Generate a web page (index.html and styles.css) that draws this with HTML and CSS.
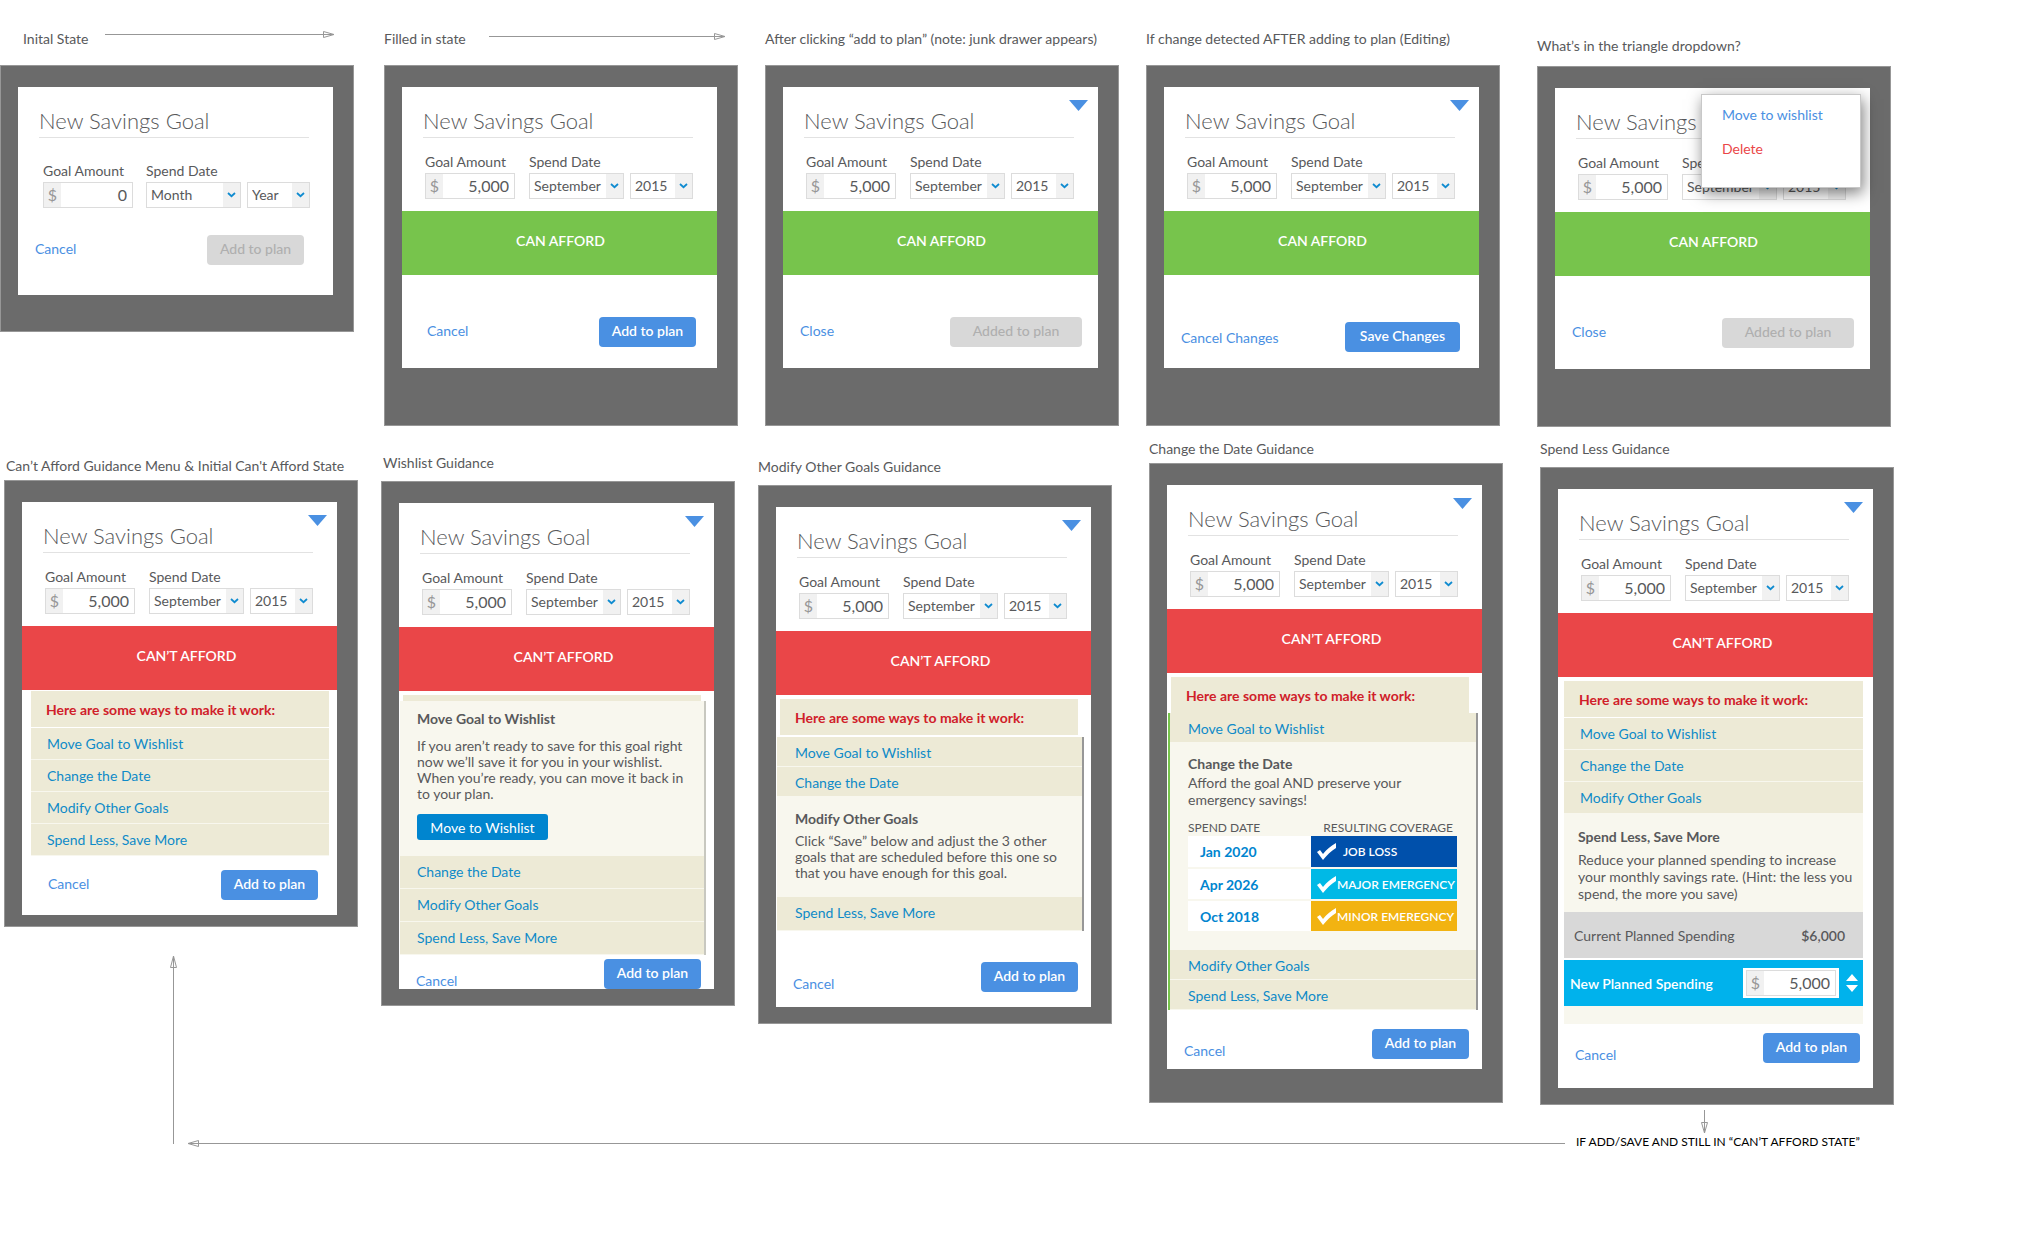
FILE: index.html
```html
<!DOCTYPE html>
<html lang="en">
<head>
  <meta charset="UTF-8">
  <meta name="viewport" content="width=device-width, initial-scale=1.0">
  <title>New Savings Goal - States</title>
  <link rel="stylesheet" href="styles.css">
</head>
<body>
  <!-- Shared icons -->
  <svg class="sprite" width="0" height="0" aria-hidden="true">
    <symbol id="chevron" viewBox="0 0 9 6"><path d="M1 1 L4.5 4.2 L8 1" fill="none" stroke="#0f8bd0" stroke-width="1.8"/></symbol>
    <symbol id="triangle" viewBox="0 0 19 11"><path d="M0 0 H19 L9.5 11 Z" fill="#4a90e2"/></symbol>
    <symbol id="check" viewBox="0 0 20 17"><path d="M0 9 L3 7 L6 11 C10 6 14 3 19 0 L19 5 C14 8 10 12 6 17 Z" fill="#fff"/></symbol>
  </svg>

  <main class="canvas">
    <!-- Row 1 -->
    <section class="screen screen-initial">
      <h2 class="screen-label">Inital State</h2>
      <div class="frame">
        <form class="card">
          <h3 class="goal-title">New Savings Goal</h3>
          <div class="fields">
            <div class="field">
              <label for="amount1">Goal Amount</label>
              <div class="money"><span>$</span><input id="amount1" type="text" value="0"></div>
            </div>
            <div class="field">
              <label for="month1">Spend Date</label>
              <div class="dates">
                <div class="select month"><select id="month1"><option>Month</option></select><span class="arrow"><svg><use href="#chevron"/></svg></span></div>
                <div class="select year"><select aria-label="Year"><option>Year</option></select><span class="arrow"><svg><use href="#chevron"/></svg></span></div>
              </div>
            </div>
          </div>
          <div class="actions">
            <a href="#">Cancel</a>
            <button class="btn" type="button" disabled>Add to plan</button>
          </div>
        </form>
      </div>
    </section>

    <section class="screen screen-filled">
      <h2 class="screen-label">Filled in state</h2>
      <div class="frame">
        <form class="card">
          <h3 class="goal-title">New Savings Goal</h3>
          <div class="fields">
            <div class="field">
              <label for="amount2">Goal Amount</label>
              <div class="money"><span>$</span><input id="amount2" type="text" value="5,000"></div>
            </div>
            <div class="field">
              <label for="month2">Spend Date</label>
              <div class="dates">
                <div class="select month"><select id="month2"><option>September</option></select><span class="arrow"><svg><use href="#chevron"/></svg></span></div>
                <div class="select year"><select aria-label="Year"><option>2015</option></select><span class="arrow"><svg><use href="#chevron"/></svg></span></div>
              </div>
            </div>
          </div>
          <div class="status can">CAN AFFORD</div>
          <div class="actions">
            <a href="#">Cancel</a>
            <button class="btn" type="button">Add to plan</button>
          </div>
        </form>
      </div>
    </section>

    <section class="screen screen-added">
      <h2 class="screen-label">After clicking “add to plan” (note: junk drawer appears)</h2>
      <div class="frame">
        <form class="card">
          <button class="menu-toggle" type="button" aria-label="More options"><svg><use href="#triangle"/></svg></button>
          <h3 class="goal-title">New Savings Goal</h3>
          <div class="fields">
            <div class="field">
              <label for="amount3">Goal Amount</label>
              <div class="money"><span>$</span><input id="amount3" type="text" value="5,000"></div>
            </div>
            <div class="field">
              <label for="month3">Spend Date</label>
              <div class="dates">
                <div class="select month"><select id="month3"><option>September</option></select><span class="arrow"><svg><use href="#chevron"/></svg></span></div>
                <div class="select year"><select aria-label="Year"><option>2015</option></select><span class="arrow"><svg><use href="#chevron"/></svg></span></div>
              </div>
            </div>
          </div>
          <div class="status can">CAN AFFORD</div>
          <div class="actions">
            <a href="#">Close</a>
            <button class="btn btn-wide" type="button" disabled>Added to plan</button>
          </div>
        </form>
      </div>
    </section>

    <section class="screen screen-editing">
      <h2 class="screen-label">If change detected AFTER adding to plan (Editing)</h2>
      <div class="frame">
        <form class="card">
          <button class="menu-toggle" type="button" aria-label="More options"><svg><use href="#triangle"/></svg></button>
          <h3 class="goal-title">New Savings Goal</h3>
          <div class="fields">
            <div class="field">
              <label for="amount4">Goal Amount</label>
              <div class="money"><span>$</span><input id="amount4" type="text" value="5,000"></div>
            </div>
            <div class="field">
              <label for="month4">Spend Date</label>
              <div class="dates">
                <div class="select month"><select id="month4"><option>September</option></select><span class="arrow"><svg><use href="#chevron"/></svg></span></div>
                <div class="select year"><select aria-label="Year"><option>2015</option></select><span class="arrow"><svg><use href="#chevron"/></svg></span></div>
              </div>
            </div>
          </div>
          <div class="status can">CAN AFFORD</div>
          <div class="actions">
            <a href="#">Cancel Changes</a>
            <button class="btn btn-save" type="button">Save Changes</button>
          </div>
        </form>
      </div>
    </section>

    <section class="screen screen-dropdown">
      <h2 class="screen-label">What’s in the triangle dropdown?</h2>
      <div class="frame">
        <form class="card">
          <h3 class="goal-title">New Savings Goal</h3>
          <div class="fields">
            <div class="field">
              <label for="amount5">Goal Amount</label>
              <div class="money"><span>$</span><input id="amount5" type="text" value="5,000"></div>
            </div>
            <div class="field">
              <label for="month5">Spend Date</label>
              <div class="dates">
                <div class="select month"><select id="month5"><option>September</option></select><span class="arrow"><svg><use href="#chevron"/></svg></span></div>
                <div class="select year"><select aria-label="Year"><option>2015</option></select><span class="arrow"><svg><use href="#chevron"/></svg></span></div>
              </div>
            </div>
          </div>
          <div class="status can">CAN AFFORD</div>
          <div class="actions">
            <a href="#">Close</a>
            <button class="btn btn-wide" type="button" disabled>Added to plan</button>
          </div>
          <nav class="menu">
            <a href="#">Move to wishlist</a>
            <a href="#" class="delete">Delete</a>
          </nav>
        </form>
      </div>
    </section>

    <!-- Row 2 -->
    <section class="screen screen-guidance">
      <h2 class="screen-label">Can’t Afford Guidance Menu &amp; Initial Can't Afford State</h2>
      <div class="frame">
        <form class="card">
          <button class="menu-toggle" type="button" aria-label="More options"><svg><use href="#triangle"/></svg></button>
          <h3 class="goal-title">New Savings Goal</h3>
          <div class="fields">
            <div class="field">
              <label for="amount6">Goal Amount</label>
              <div class="money"><span>$</span><input id="amount6" type="text" value="5,000"></div>
            </div>
            <div class="field">
              <label for="month6">Spend Date</label>
              <div class="dates">
                <div class="select month"><select id="month6"><option>September</option></select><span class="arrow"><svg><use href="#chevron"/></svg></span></div>
                <div class="select year"><select aria-label="Year"><option>2015</option></select><span class="arrow"><svg><use href="#chevron"/></svg></span></div>
              </div>
            </div>
          </div>
          <div class="status cant">CAN’T AFFORD</div>
          <div class="guide-head">Here are some ways to make it work:</div>
          <div class="guide">
            <a class="guide-item" href="#">Move Goal to Wishlist</a>
            <a class="guide-item" href="#">Change the Date</a>
            <a class="guide-item" href="#">Modify Other Goals</a>
            <a class="guide-item" href="#">Spend Less, Save More</a>
          </div>
          <div class="actions">
            <a href="#">Cancel</a>
            <button class="btn" type="button">Add to plan</button>
          </div>
        </form>
      </div>
    </section>

    <section class="screen screen-wishlist">
      <h2 class="screen-label">Wishlist Guidance</h2>
      <div class="frame">
        <form class="card">
          <button class="menu-toggle" type="button" aria-label="More options"><svg><use href="#triangle"/></svg></button>
          <h3 class="goal-title">New Savings Goal</h3>
          <div class="fields">
            <div class="field">
              <label for="amount7">Goal Amount</label>
              <div class="money"><span>$</span><input id="amount7" type="text" value="5,000"></div>
            </div>
            <div class="field">
              <label for="month7">Spend Date</label>
              <div class="dates">
                <div class="select month"><select id="month7"><option>September</option></select><span class="arrow"><svg><use href="#chevron"/></svg></span></div>
                <div class="select year"><select aria-label="Year"><option>2015</option></select><span class="arrow"><svg><use href="#chevron"/></svg></span></div>
              </div>
            </div>
          </div>
          <div class="status cant">CAN’T AFFORD</div>
          <div class="guide-head"></div>
          <div class="guide">
            <div class="panel">
              <h4>Move Goal to Wishlist</h4>
              <p>If you aren’t ready to save for this goal right<br>now we’ll save it for you in your wishlist.<br>When you’re ready, you can move it back in<br>to your plan.</p>
              <button class="btn-wishlist" type="button">Move to Wishlist</button>
            </div>
            <a class="guide-item" href="#">Change the Date</a>
            <a class="guide-item" href="#">Modify Other Goals</a>
            <a class="guide-item" href="#">Spend Less, Save More</a>
          </div>
          <div class="actions">
            <a href="#">Cancel</a>
            <button class="btn" type="button">Add to plan</button>
          </div>
        </form>
      </div>
    </section>

    <section class="screen screen-modify">
      <h2 class="screen-label">Modify Other Goals Guidance</h2>
      <div class="frame">
        <form class="card">
          <button class="menu-toggle" type="button" aria-label="More options"><svg><use href="#triangle"/></svg></button>
          <h3 class="goal-title">New Savings Goal</h3>
          <div class="fields">
            <div class="field">
              <label for="amount8">Goal Amount</label>
              <div class="money"><span>$</span><input id="amount8" type="text" value="5,000"></div>
            </div>
            <div class="field">
              <label for="month8">Spend Date</label>
              <div class="dates">
                <div class="select month"><select id="month8"><option>September</option></select><span class="arrow"><svg><use href="#chevron"/></svg></span></div>
                <div class="select year"><select aria-label="Year"><option>2015</option></select><span class="arrow"><svg><use href="#chevron"/></svg></span></div>
              </div>
            </div>
          </div>
          <div class="status cant">CAN’T AFFORD</div>
          <div class="guide-head">Here are some ways to make it work:</div>
          <div class="guide">
            <a class="guide-item" href="#">Move Goal to Wishlist</a>
            <a class="guide-item" href="#">Change the Date</a>
            <div class="panel">
              <h4>Modify Other Goals</h4>
              <p>Click “Save” below and adjust the 3 other<br>goals that are scheduled before this one so<br>that you have enough for this goal.</p>
            </div>
            <a class="guide-item last" href="#">Spend Less, Save More</a>
          </div>
          <div class="actions">
            <a href="#">Cancel</a>
            <button class="btn" type="button">Add to plan</button>
          </div>
        </form>
      </div>
    </section>

    <section class="screen screen-date">
      <h2 class="screen-label">Change the Date Guidance</h2>
      <div class="frame">
        <form class="card">
          <button class="menu-toggle" type="button" aria-label="More options"><svg><use href="#triangle"/></svg></button>
          <h3 class="goal-title">New Savings Goal</h3>
          <div class="fields">
            <div class="field">
              <label for="amount9">Goal Amount</label>
              <div class="money"><span>$</span><input id="amount9" type="text" value="5,000"></div>
            </div>
            <div class="field">
              <label for="month9">Spend Date</label>
              <div class="dates">
                <div class="select month"><select id="month9"><option>September</option></select><span class="arrow"><svg><use href="#chevron"/></svg></span></div>
                <div class="select year"><select aria-label="Year"><option>2015</option></select><span class="arrow"><svg><use href="#chevron"/></svg></span></div>
              </div>
            </div>
          </div>
          <div class="status cant">CAN’T AFFORD</div>
          <div class="guide-head">Here are some ways to make it work:</div>
          <div class="guide">
            <a class="guide-item" href="#">Move Goal to Wishlist</a>
            <div class="panel">
              <h4>Change the Date</h4>
              <p>Afford the goal AND preserve your<br>emergency savings!</p>
              <table class="coverage">
                <thead>
                  <tr><th>SPEND DATE</th><th>RESULTING COVERAGE</th></tr>
                </thead>
                <tbody>
                  <tr><td>Jan 2020</td><td class="job"><div><svg><use href="#check"/></svg><span>JOB LOSS</span></div></td></tr>
                  <tr><td>Apr 2026</td><td class="major"><div><svg><use href="#check"/></svg><span>MAJOR EMERGENCY</span></div></td></tr>
                  <tr><td>Oct 2018</td><td class="minor"><div><svg><use href="#check"/></svg><span>MINOR EMEREGNCY</span></div></td></tr>
                </tbody>
              </table>
            </div>
            <a class="guide-item" href="#">Modify Other Goals</a>
            <a class="guide-item" href="#">Spend Less, Save More</a>
          </div>
          <div class="actions">
            <a href="#">Cancel</a>
            <button class="btn" type="button">Add to plan</button>
          </div>
        </form>
      </div>
    </section>

    <section class="screen screen-spend">
      <h2 class="screen-label">Spend Less Guidance</h2>
      <div class="frame">
        <form class="card">
          <button class="menu-toggle" type="button" aria-label="More options"><svg><use href="#triangle"/></svg></button>
          <h3 class="goal-title">New Savings Goal</h3>
          <div class="fields">
            <div class="field">
              <label for="amount10">Goal Amount</label>
              <div class="money"><span>$</span><input id="amount10" type="text" value="5,000"></div>
            </div>
            <div class="field">
              <label for="month10">Spend Date</label>
              <div class="dates">
                <div class="select month"><select id="month10"><option>September</option></select><span class="arrow"><svg><use href="#chevron"/></svg></span></div>
                <div class="select year"><select aria-label="Year"><option>2015</option></select><span class="arrow"><svg><use href="#chevron"/></svg></span></div>
              </div>
            </div>
          </div>
          <div class="status cant">CAN’T AFFORD</div>
          <div class="guide-head">Here are some ways to make it work:</div>
          <div class="guide">
            <a class="guide-item" href="#">Move Goal to Wishlist</a>
            <a class="guide-item" href="#">Change the Date</a>
            <a class="guide-item" href="#">Modify Other Goals</a>
            <div class="panel">
              <h4>Spend Less, Save More</h4>
              <p>Reduce your planned spending to increase<br>your monthly savings rate. (Hint: the less you<br>spend, the more you save)</p>
            </div>
            <div class="spending current"><span>Current Planned Spending</span><strong>$6,000</strong></div>
            <div class="spending new">
              <label for="spending">New Planned Spending</label>
              <div class="money-box"><div class="money"><span>$</span><input id="spending" type="text" value="5,000"></div></div>
              <svg class="stepper" width="12" height="18" viewBox="0 0 12 18"><path d="M0 7 L6 0 L12 7 Z M0 11 L6 18 L12 11 Z" fill="#fff"/></svg>
            </div>
          </div>
          <div class="actions">
            <a href="#">Cancel</a>
            <button class="btn" type="button">Add to plan</button>
          </div>
        </form>
      </div>
    </section>

    <!-- Flow arrows between the screens -->
    <svg class="arrows" width="1900" height="1160" viewBox="0 0 1900 1160" fill="none" stroke="#979797">
      <path d="M105 34.5 H334 M323.5 31.5 L334 34.5 L323.5 37.5 Z"/>
      <path d="M489 36.5 H725 M714.5 33.5 L725 36.5 L714.5 39.5 Z"/>
      <path d="M173.5 1144 V956 M170.5 967.5 L173.5 956 L176.5 967.5 Z"/>
      <path d="M1565 1143.5 H188 M198.5 1140.5 L188 1143.5 L198.5 1146.5 Z"/>
      <path d="M1704.5 1110 V1133 M1701.5 1122.5 L1704.5 1133 L1707.5 1122.5 Z"/>
    </svg>
    <p class="flow-note">IF ADD/SAVE AND STILL IN “CAN’T AFFORD STATE”</p>
  </main>
</body>
</html>
```
FILE: styles.css
```css
* {
  box-sizing: border-box;
}

body {
  margin: 0;
  background-color: #fff;
  font-family: Lato, "Open Sans", sans-serif;
  font-size: 14px;
  color: #58595b;
}

h2, h3, h4, p {
  margin: 0;
  font-weight: normal;
}

a {
  color: #4a90e2;
  text-decoration: none;
}

input, select, button {
  font: inherit;
  color: inherit;
  margin: 0;
  padding: 0;
  border: none;
  border-radius: 0;
  background: none;
}

.sprite {
  position: absolute;
}

/* Canvas with the free-standing screens */
.canvas {
  position: relative;
  min-height: 1240px;
}

.screen {
  position: absolute;
  width: 354px;
}

.screen-initial { left: 0; top: 27px; }
.screen-filled { left: 384px; top: 27px; }
.screen-added { left: 765px; top: 27px; }
.screen-editing { left: 1146px; top: 27px; }
.screen-dropdown { left: 1537px; top: 34px; }
.screen-guidance { left: 4px; top: 454px; }
.screen-wishlist { left: 381px; top: 451px; }
.screen-modify { left: 758px; top: 455px; }
.screen-date { left: 1149px; top: 437px; }
.screen-spend { left: 1540px; top: 437px; }

.arrows {
  position: absolute;
  left: 0;
  top: 0;
  pointer-events: none;
}

.flow-note {
  position: absolute;
  left: 1576px;
  top: 1132px;
  line-height: 20px;
  font-size: 12px;
  color: #000;
}

.screen-label {
  font-size: 14px;
  line-height: 24px;
  padding-bottom: 2px;
  margin-bottom: 12px;
  white-space: nowrap;
}

.screen-initial .screen-label { padding-left: 23px; }
.screen-dropdown .screen-label { margin-bottom: 6px; }

.screen-guidance .screen-label,
.screen-date .screen-label { margin-bottom: 0; }

.screen-guidance .screen-label,
.screen-wishlist .screen-label { padding-left: 2px; }

.screen-wishlist .screen-label,
.screen-modify .screen-label,
.screen-spend .screen-label { margin-bottom: 4px; }

.frame {
  background-color: #6b6b6b;
  border: 1px solid #979797;
  padding: 21px 20px 57px 17px;
}

.screen-initial .frame { padding-bottom: 36px; }
.screen-guidance .frame { padding-bottom: 11px; }
.screen-date .frame { padding-bottom: 33px; }

.screen-wishlist .frame,
.screen-modify .frame,
.screen-spend .frame { padding-bottom: 16px; }

/* Card */
.card {
  position: relative;
  background-color: #fff;
}

.goal-title {
  margin: 0 24px 0 21px;
  padding-top: 18px;
  border-bottom: 1px solid #e2e2e2;
  font-size: 22px;
  font-weight: 300;
  line-height: 32px;
}

.menu-toggle {
  position: absolute;
  top: 13px;
  right: 10px;
  width: 19px;
  height: 11px;
  cursor: pointer;
}

.menu-toggle svg {
  display: block;
  width: 19px;
  height: 11px;
}

.fields {
  display: flex;
  gap: 14px;
  padding: 15px 24px 12px 23px;
}

.screen-initial .fields {
  gap: 13px;
  padding: 24px 22px 12px 25px;
}

.field label {
  display: block;
  line-height: 18px;
  padding-bottom: 2px;
}

.money {
  display: flex;
  width: 90px;
  height: 26px;
  border: 1px solid #dcdcdc;
  background-color: #fff;
  font-size: 16px;
}

.money span {
  width: 17px;
  line-height: 23px;
  text-align: center;
  color: #979797;
  background-color: #f1f1f1;
}

.money input {
  flex: 1;
  min-width: 0;
  padding: 0 5px 2px 0;
  text-align: right;
  color: #58595b;
}

.dates {
  display: flex;
  gap: 6px;
}

.select {
  position: relative;
  height: 26px;
  border: 1px solid #dcdcdc;
}

.month { width: 95px; }
.year { width: 63px; }

.select select {
  display: block;
  width: 100%;
  height: 24px;
  padding: 0 0 1px 4px;
  appearance: none;
}

.select .arrow {
  position: absolute;
  top: 0;
  right: 0;
  display: flex;
  align-items: center;
  justify-content: center;
  width: 17px;
  height: 24px;
  background-color: #f1f1f1;
  pointer-events: none;
}

.arrow svg {
  width: 9px;
  height: 6px;
}

.status {
  height: 64px;
  padding-left: 2px;
  line-height: 60px;
  text-align: center;
  font-weight: 600;
  color: #fff;
}

.can { background-color: #77c44c; }

.cant {
  padding-left: 14px;
  background-color: #ea4648;
}

/* Bottom row: cancel link and button */
.actions {
  display: flex;
  justify-content: space-between;
  align-items: center;
  padding: 42px 16px 21px 17px;
}

.actions a { padding-bottom: 4px; }

.screen-initial .actions { padding: 15px 29px 30px 17px; }
.screen-filled .actions { padding-left: 25px; padding-right: 21px; }
.screen-editing .actions { padding: 47px 19px 16px 17px; }
.screen-guidance .actions { padding: 14px 19px 15px 26px; }
.screen-wishlist .actions { padding: 4px 13px 0 17px; }
.screen-modify .actions { padding: 31px 13px 15px 17px; }
.screen-date .actions { padding: 19px 13px 10px 17px; }
.screen-spend .actions { padding: 9px 13px 25px 17px; }

.screen-wishlist .actions,
.screen-modify .actions,
.screen-date .actions,
.screen-spend .actions {
  align-items: flex-end;
  line-height: 16px;
}

.screen-editing .actions a,
.screen-wishlist .actions a,
.screen-modify .actions a,
.screen-date .actions a,
.screen-spend .actions a {
  padding-bottom: 0;
}

.btn {
  width: 97px;
  height: 30px;
  border-radius: 4px;
  padding-bottom: 3px;
  font-weight: 600;
  color: #fff;
  background-color: #4a90e2;
  cursor: pointer;
}

.btn-wide { width: 132px; }
.btn-save { width: 115px; }

.btn:disabled {
  color: #afafaf;
  background-color: #d8d8d8;
  font-weight: 500;
}

/* Triangle dropdown */
.menu {
  position: absolute;
  top: 6px;
  left: 146px;
  width: 160px;
  height: 94px;
  padding: 3px 20px;
  border: 1px solid #c8c8c8;
  background-color: #fff;
  box-shadow: 2px 5px 14px rgba(0, 0, 0, 0.5);
}

.menu a {
  display: block;
  line-height: 34px;
}

.menu .delete { color: #ea4648; }

/* Guidance list */
.guide-head {
  margin: 4px 13px 0 4px;
  padding-left: 15px;
  height: 36px;
  line-height: 38px;
  font-weight: 700;
  color: #d0202a;
  background-color: #edead6;
}

.guide-item {
  display: block;
  height: 32px;
  line-height: 32px;
  padding-left: 16px;
  color: #0f8bc8;
  background-color: #edead6;
  border-bottom: 1px solid #f8f7ee;
}

.panel {
  background-color: #f8f7ee;
}

.panel h4 {
  font-size: 14px;
  font-weight: 700;
  line-height: 20px;
}

.panel p {
  line-height: 16px;
  white-space: nowrap;
}

.screen-guidance .guide-head {
  margin: 1px 8px 1px 9px;
}

.screen-guidance .guide {
  margin: 0 8px 0 9px;
}

.screen-wishlist .guide-head {
  height: 6px;
}

.screen-wishlist .guide {
  margin: 0 8px 0 1px;
  border-right: 2px solid #c8c8c0;
}

.screen-wishlist .panel { padding: 8px 0 16px 17px; }
.screen-wishlist .panel p { margin: 9px 0 12px; }

.screen-wishlist .guide-item {
  height: 33px;
  padding-left: 17px;
}

.btn-wishlist {
  display: block;
  width: 131px;
  height: 26px;
  border-radius: 3px;
  color: #fff;
  background-color: #0085cf;
  cursor: pointer;
}

.screen-modify .guide {
  margin: 2px 7px 0 1px;
  border-right: 2px solid #979797;
}

.screen-modify .guide-item {
  height: 30px;
  padding-left: 18px;
}

.screen-modify .guide-item.last { height: 34px; }
.screen-modify .panel { padding: 12px 0 16px 18px; }
.screen-modify .panel p { margin-top: 4px; }

.screen-date .guide {
  margin: 0 4px 0 1px;
  border-left: 2px solid #77c44c;
  border-right: 2px solid #979797;
}

.screen-date .guide-item {
  height: 30px;
  padding-left: 18px;
}

.screen-date .panel { padding: 11px 19px 17px 18px; }
.screen-date .panel p { line-height: 17px; }

.coverage {
  width: 100%;
  margin-top: 12px;
  border-collapse: collapse;
  table-layout: fixed;
}

.coverage th {
  padding: 0;
  font-size: 12px;
  font-weight: normal;
  line-height: 16px;
  text-align: left;
  white-space: nowrap;
}

.coverage th:last-child {
  width: 146px;
  padding-right: 4px;
  text-align: right;
}

.coverage td {
  height: 32px;
  padding: 0 0 0 12px;
  font-weight: 700;
  color: #0085cf;
  background-color: #fff;
  border-bottom: 2px solid #f8f7ee;
}

.coverage td:last-child {
  padding: 0 0 0 6px;
  font-size: 12px;
  font-weight: 600;
  color: #fff;
}

.coverage td div {
  display: flex;
  align-items: center;
  white-space: nowrap;
}

.coverage svg {
  width: 20px;
  height: 17px;
}

.coverage .job svg { margin-right: 6px; }

.coverage .job { background-color: #0050ab; }
.coverage .major { background-color: #00b9e6; }
.coverage .minor { background-color: #f2b311; }

.screen-spend .guide-head {
  margin: 4px 10px 1px 6px;
}

.screen-spend .guide {
  margin: 0 10px 0 6px;
  padding-bottom: 18px;
  background-color: #f8f7ee;
}

.screen-spend .panel { padding: 13px 0 10px 14px; }

.screen-spend .panel p {
  margin-top: 4px;
  line-height: 17px;
}

.spending {
  display: flex;
  align-items: center;
  height: 46px;
}

.spending.current {
  justify-content: space-between;
  padding: 0 18px 0 10px;
  background-color: #d8d8d8;
}

.spending.current strong { font-weight: 600; }

.spending.new {
  height: 48px;
  padding: 0 4px 0 6px;
  border-top: 2px solid #fff;
  font-weight: 600;
  color: #fff;
  background-color: #00b2ec;
}

.spending.new label { flex: 1; }

.money-box {
  padding: 2px 3px;
  background-color: #fff;
  font-weight: normal;
}

.stepper { margin: 0 1px 0 7px; }
```
